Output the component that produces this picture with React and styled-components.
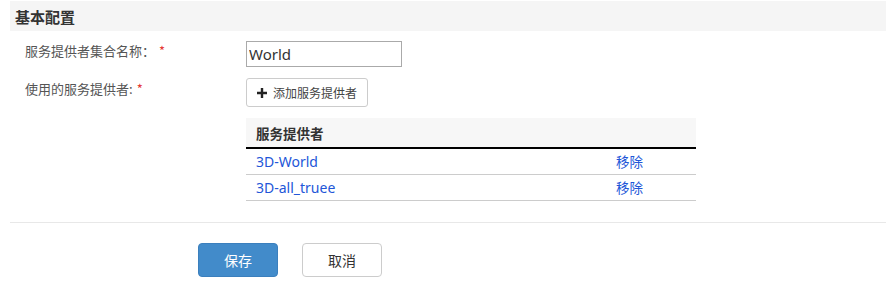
import React from "react";
import styled, { createGlobalStyle } from "styled-components";

const Global = createGlobalStyle`
  html, body { margin: 0; padding: 0; background: #fff; }
  body { font-family: "Noto Sans", "Noto Sans CJK SC", sans-serif; color: #333; }
  * { box-sizing: border-box; }
`;

const Page = styled.div`
  padding: 1px 0 0 10px;
  width: 886px;
`;

const SectionHeader = styled.div`
  height: 30px;
  background: #f5f5f5;
  display: flex;
  align-items: center;
  padding-left: 5px;
  font-size: 15px;
  font-weight: bold;
  color: #333;
  font-family: "Noto Sans CJK SC", sans-serif;
`;

const Form = styled.div`
  padding: 10px 0 0 15px;
  display: flex;
  flex-direction: column;
  gap: 11px;
`;

const Row = styled.div`
  display: grid;
  grid-template-columns: 221px 1fr;
  align-items: start;
`;

const Label = styled.div`
  font-size: 13px;
  color: #555;
  font-family: "Noto Sans CJK SC", sans-serif;
  line-height: 18px;
  padding-top: ${(p) => p.$pt || 1}px;
`;

const Star = styled.span`
  color: #e53935;
  margin-left: 4px;
`;

const TextInput = styled.input`
  width: 156px;
  height: 26px;
  border: 1px solid #aaa;
  padding: 0 2px;
  font-size: 15px;
  font-family: "Noto Sans", sans-serif;
  color: #333;
  outline: none;
`;

const Controls = styled.div`
  display: flex;
  flex-direction: column;
  gap: 11px;
  align-items: flex-start;
`;

const AddButton = styled.button`
  height: 29px;
  width: 122px;
  border: 1px solid #ccc;
  border-radius: 3px;
  background: #fff;
  display: flex;
  align-items: center;
  gap: 6px;
  padding: 0 0 0 10px;
  font-size: 12px;
  color: #444;
  font-family: "Noto Sans CJK SC", sans-serif;
  cursor: pointer;
`;

const Table = styled.table`
  width: 450px;
  border-collapse: collapse;
  font-family: "Noto Sans", "Noto Sans CJK SC", sans-serif;
`;

const Th = styled.th`
  height: 30px;
  background: #f7f7f7;
  border-bottom: 2px solid #000;
  text-align: left;
  padding: 0 10px;
  font-size: 13.5px;
  font-weight: bold;
  color: #333;
  font-family: "Noto Sans CJK SC", sans-serif;
`;

const Td = styled.td`
  height: 26px;
  border-bottom: 1px solid #ccc;
  padding: 0 10px;
  font-size: 14px;
  color: #1a56db;
  width: ${(p) => p.$w || "auto"};
`;

const Link = styled.a`
  color: #2256d8;
  text-decoration: none;
  font-family: ${(p) => (p.$cjk ? '"Noto Sans CJK SC", sans-serif' : 'inherit')};
  font-size: ${(p) => (p.$cjk ? "13.5px" : "14px")};
`;

const Divider = styled.hr`
  border: none;
  border-top: 1px solid #e8e8e8;
  margin: 21px 0 0 0;
`;

const Footer = styled.div`
  display: flex;
  gap: 24px;
  padding: 20px 0 0 188px;
`;

const Button = styled.button`
  width: 80px;
  height: 34px;
  border-radius: 4px;
  font-size: 14px;
  font-family: "Noto Sans CJK SC", sans-serif;
  cursor: pointer;
  background: ${(p) => (p.$primary ? "#428bca" : "#fff")};
  color: ${(p) => (p.$primary ? "#fff" : "#333")};
  border: 1px solid ${(p) => (p.$primary ? "#3b7fbd" : "#ccc")};
`;

const PlusIcon = () => (
  <svg width="10" height="10" viewBox="0 0 10 10">
    <path d="M3.8 0h2.4v3.8H10v2.4H6.2V10H3.8V6.2H0V3.8h3.8z" fill="#222" />
  </svg>
);

const providers = ["3D-World", "3D-all_truee"];

export default function App() {
  return (
    <Page>
      <Global />
      <SectionHeader>基本配置</SectionHeader>
      <Form>
        <Row>
          <Label $pt={1}>
            服务提供者集合名称：<Star>*</Star>
          </Label>
          <TextInput defaultValue="World" />
        </Row>
        <Row>
          <Label $pt={2}>
            使用的服务提供者:<Star>*</Star>
          </Label>
          <Controls>
            <AddButton>
              <PlusIcon />
              添加服务提供者
            </AddButton>
            <Table>
              <thead>
                <tr>
                  <Th colSpan={2}>服务提供者</Th>
                </tr>
              </thead>
              <tbody>
                {providers.map((p) => (
                  <tr key={p}>
                    <Td $w="360px">
                      <Link href="#">{p}</Link>
                    </Td>
                    <Td>
                      <Link href="#" $cjk>
                        移除
                      </Link>
                    </Td>
                  </tr>
                ))}
              </tbody>
            </Table>
          </Controls>
        </Row>
      </Form>
      <Divider />
      <Footer>
        <Button $primary>保存</Button>
        <Button>取消</Button>
      </Footer>
    </Page>
  );
}
